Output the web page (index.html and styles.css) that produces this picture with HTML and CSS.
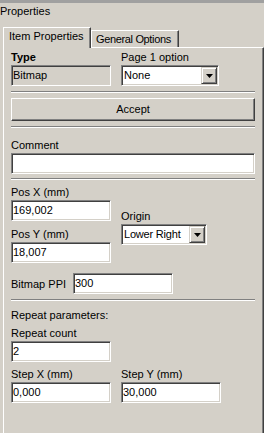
FILE: index.html
```html
<!DOCTYPE html>
<html lang="en">
<head>
    <meta charset="UTF-8">
    <title>Properties</title>
    <link rel="stylesheet" href="styles.css">
</head>
<body>
    <div class="topbar"></div>
    <div class="title">Properties</div>

    <div class="tabs">
        <div class="tab tab-active">Item Properties</div>
        <div class="tab tab-other">General Options</div>
    </div>

    <div class="pane">
        <div class="row row-first">
            <div class="col">
                <div class="label label-bold">Type</div>
                <div class="field field-readonly">Bitmap</div>
            </div>
            <div class="col">
                <div class="label">Page 1 option</div>
                <div class="combo combo-page">
                    <span class="combo-text">None</span>
                    <span class="combo-btn">
                        <svg width="7" height="4" viewBox="0 0 7 4"><polygon points="0,0 7,0 3.5,4" fill="#000"/></svg>
                    </span>
                </div>
            </div>
        </div>

        <div class="separator"></div>
        <div class="button">Accept</div>
        <div class="separator"></div>

        <div class="label label-comment">Comment</div>
        <div class="field field-wide"></div>

        <div class="separator separator-tight"></div>

        <div class="row row-pos">
            <div class="col">
                <div class="label">Pos X (mm)</div>
                <div class="field">169,002</div>
                <div class="label label-next">Pos Y (mm)</div>
                <div class="field">18,007</div>
            </div>
            <div class="col col-origin">
                <div class="label label-origin">Origin</div>
                <div class="combo combo-origin">
                    <span class="combo-text combo-text-tight">Lower Right</span>
                    <span class="combo-btn">
                        <svg width="7" height="4" viewBox="0 0 7 4"><polygon points="0,0 7,0 3.5,4" fill="#000"/></svg>
                    </span>
                </div>
            </div>
        </div>

        <div class="ppi-row">
            <div class="ppi-label">Bitmap PPI</div>
            <div class="field">300</div>
        </div>

        <div class="separator"></div>

        <div class="label label-section">Repeat parameters:</div>
        <div class="label label-count">Repeat count</div>
        <div class="field">2</div>

        <div class="row row-step">
            <div class="col">
                <div class="label">Step X (mm)</div>
                <div class="field">0,000</div>
            </div>
            <div class="col">
                <div class="label">Step Y (mm)</div>
                <div class="field">30,000</div>
            </div>
        </div>
    </div>
</body>
</html>
```

FILE: styles.css
```css
* {
    margin: 0;
    padding: 0;
    box-sizing: border-box;
    font-family: 'Liberation Sans', Arial, sans-serif;
    font-size: 11px;
}

body {
    background: #d4d0c8;
    color: #000;
    width: 264px;
    height: 433px;
    overflow: hidden;
}

.topbar {
    height: 3px;
    background: #a0a0a0;
}

.title {
    height: 14px;
    line-height: 14px;
    margin: 1px 0 9px 0;
}

/* Tabs */
.tabs {
    display: flex;
    align-items: flex-end;
    height: 21px;
    padding-left: 3px;
    margin-bottom: -1px;
}

.tab {
    width: 88px;
    height: 17px;
    margin-bottom: 1px;
    border-top: 1px solid #fff;
    border-left: 1px solid #fff;
    border-right: 1px solid #404040;
    box-shadow: inset -1px 0 #808080;
    line-height: 14px;
    padding: 1px 0 0 4px;
    white-space: nowrap;
    overflow: hidden;
}

.tab-active {
    height: 21px;
    margin-bottom: 0;
    padding-left: 5px;
    background: #d4d0c8;
    position: relative;
    z-index: 1;
}

.tab-other {
    letter-spacing: -0.35px;
}

.pane {
    width: 261px;
    height: 386px;
    margin-left: 3px;
    border-top: 1px solid #fff;
    border-left: 1px solid #fff;
    border-right: 1px solid #404040;
    box-shadow: inset -1px 0 #808080;
    padding: 0 8px 0 7px;
}

/* Layout */
.row {
    display: flex;
    gap: 10px;
}

.row-first {
    margin-top: 2px;
}

.row-pos {
    margin-top: 5px;
}

.row-step {
    margin-top: 5px;
}

.col-origin {
    padding-top: 24px;
}

.label {
    line-height: 14px;
    height: 14px;
    margin-bottom: 1px;
    white-space: nowrap;
}

.label-bold {
    font-weight: bold;
}

.label-comment {
    margin-top: 10px;
}

.label-next {
    margin-top: 6px;
}

.label-section {
    margin-top: 7px;
    margin-bottom: 0;
}

.label-count {
    margin-top: 4px;
}

/* Fields */
.field {
    width: 100px;
    height: 21px;
    background: #fff;
    border-top: 1px solid #808080;
    border-left: 1px solid #808080;
    border-right: 1px solid #fff;
    border-bottom: 1px solid #fff;
    box-shadow: inset 1px 1px #404040, inset -1px -1px #d4d0c8;
    line-height: 19px;
    padding-left: 1px;
    white-space: nowrap;
}

.field-readonly {
    background: #d4d0c8;
}

.field-wide {
    width: 100%;
}

.combo {
    display: flex;
    height: 21px;
    background: #fff;
    border-top: 1px solid #808080;
    border-left: 1px solid #808080;
    border-right: 1px solid #fff;
    border-bottom: 1px solid #fff;
    box-shadow: inset 1px 1px #404040, inset -1px -1px #d4d0c8;
    padding: 1px;
}

.combo-page {
    width: 98px;
}

.combo-origin {
    width: 86px;
}

.combo-text {
    flex: 1;
    line-height: 17px;
    padding-left: 1px;
    white-space: nowrap;
    overflow: hidden;
}

.combo-text-tight {
    letter-spacing: -0.2px;
}

.combo-btn {
    width: 16px;
    height: 17px;
    flex-shrink: 0;
    background: #d4d0c8;
    border-top: 1px solid #d4d0c8;
    border-left: 1px solid #d4d0c8;
    border-right: 1px solid #404040;
    border-bottom: 1px solid #404040;
    box-shadow: inset 1px 1px #fff, inset -1px -1px #808080;
    display: flex;
    align-items: center;
    justify-content: center;
}

.combo-btn svg {
    display: block;
}

/* Button and separators */
.separator {
    height: 2px;
    margin-top: 5px;
    border-top: 1px solid #808080;
    border-bottom: 1px solid #fff;
}

.separator-tight {
    margin-top: 4px;
}

.button {
    height: 23px;
    margin-top: 5px;
    border-top: 1px solid #fff;
    border-left: 1px solid #fff;
    border-right: 1px solid #404040;
    border-bottom: 1px solid #404040;
    box-shadow: inset -1px -1px #808080;
    text-align: center;
    line-height: 21px;
}

.ppi-row {
    display: flex;
    align-items: center;
    margin-top: 10px;
}

.ppi-label {
    width: 62px;
    white-space: nowrap;
}
```
